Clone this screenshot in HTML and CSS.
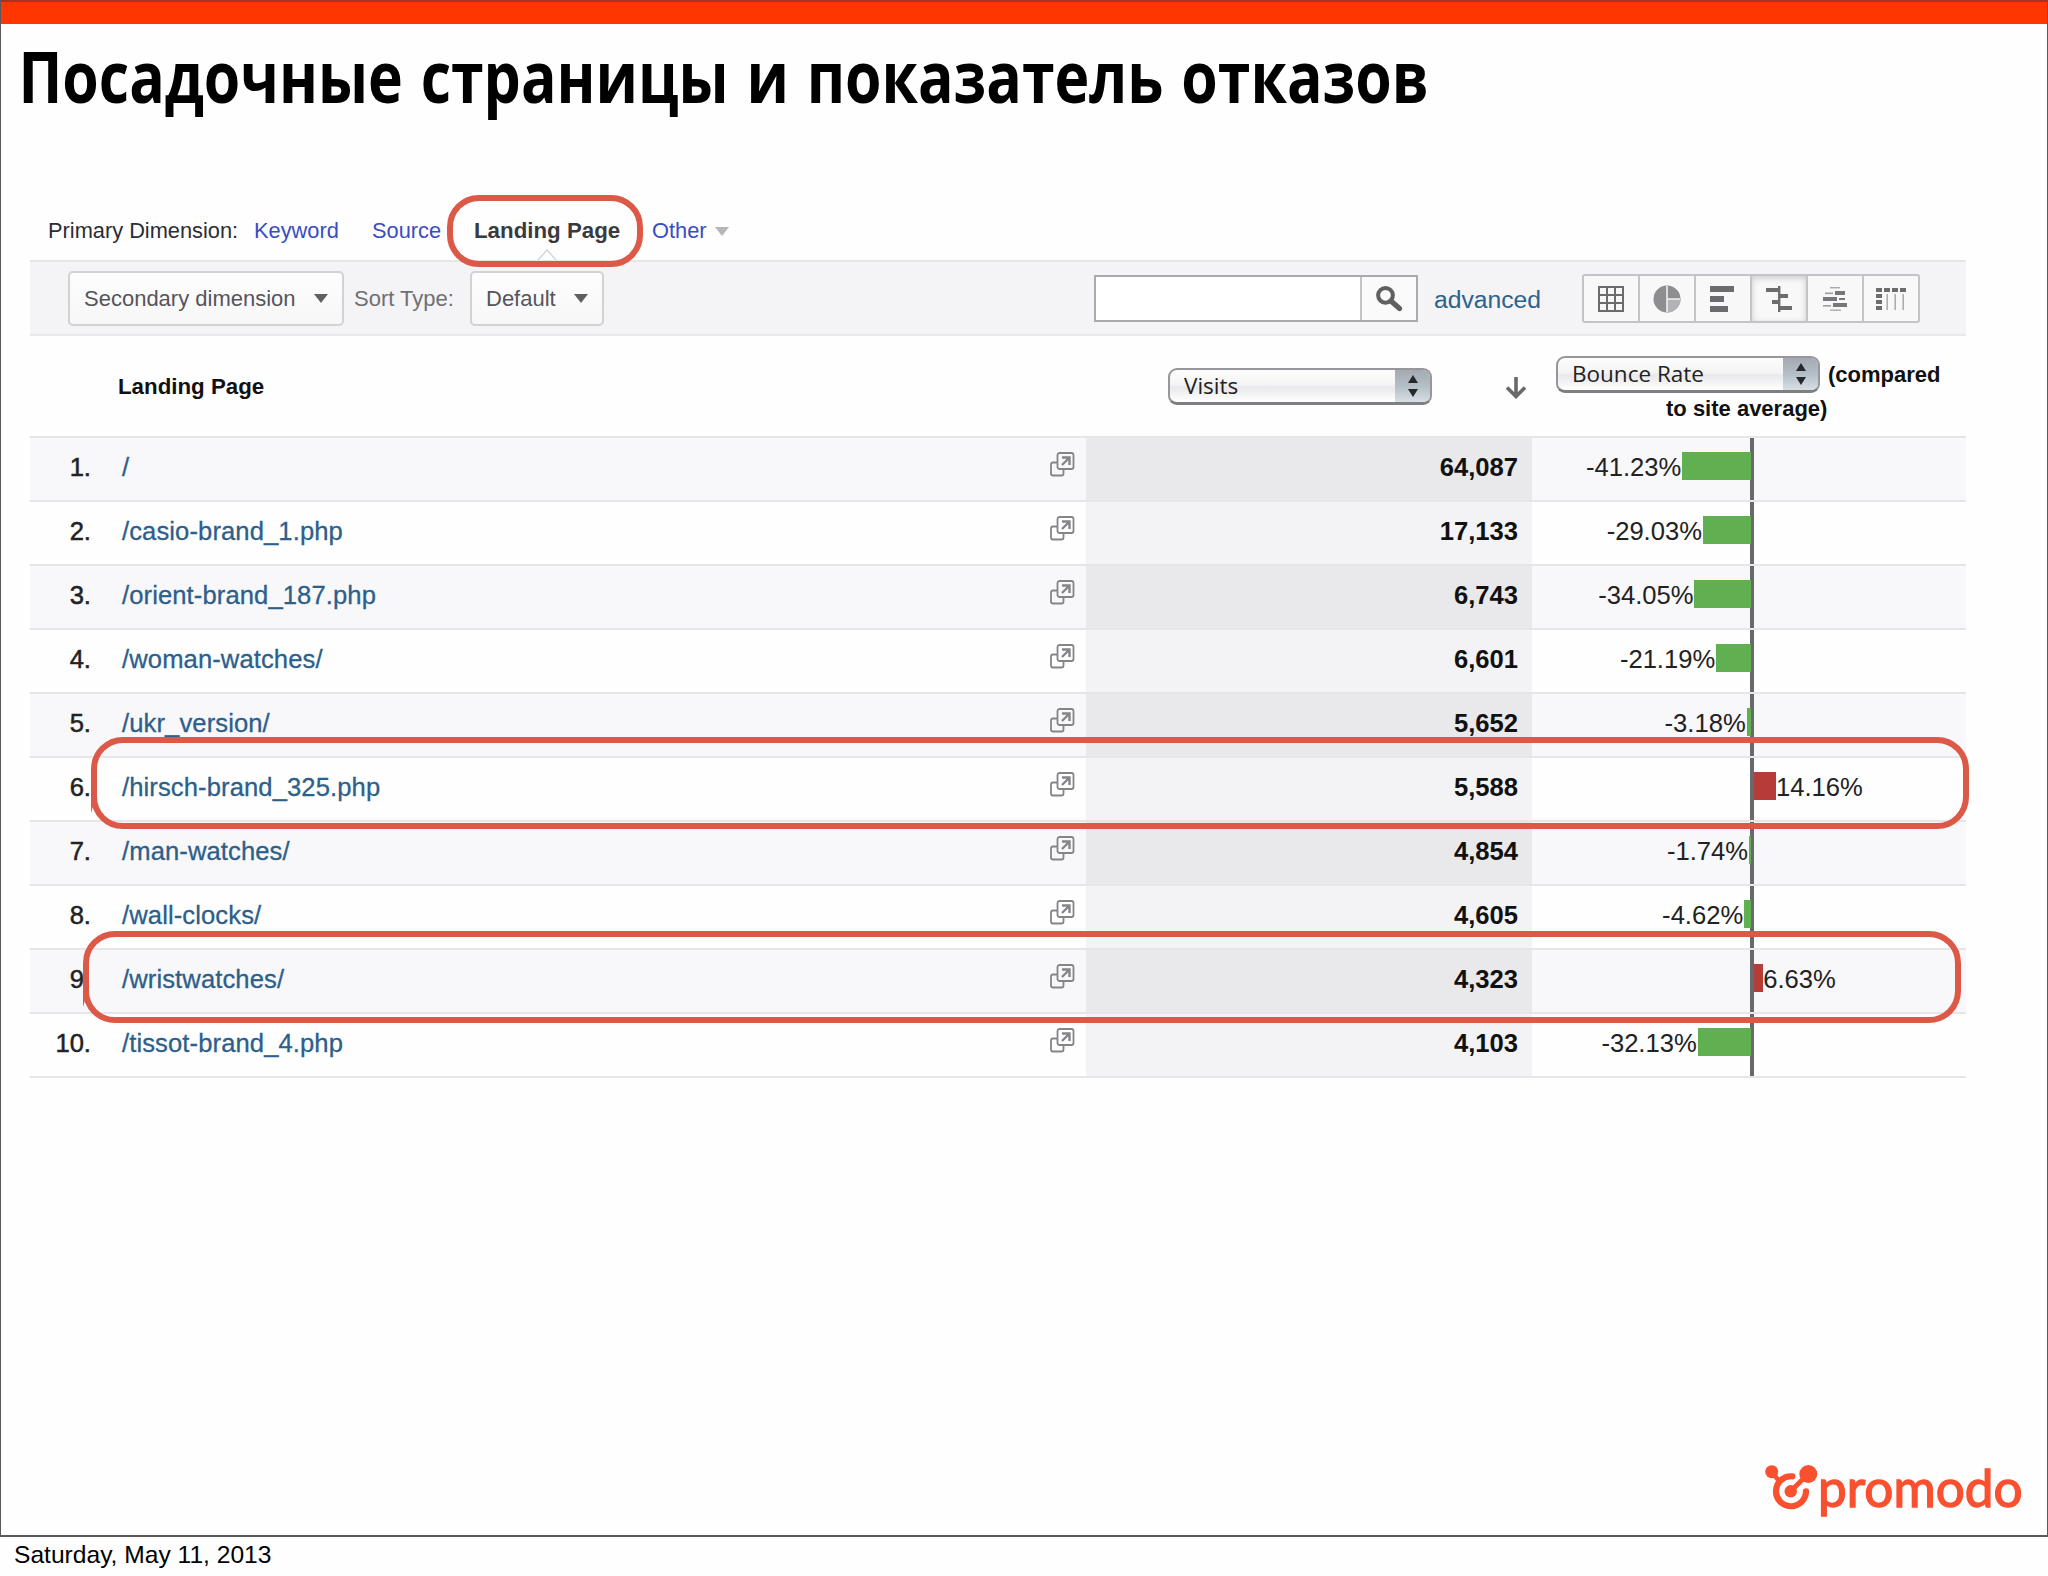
FILE: index.html
```html
<!DOCTYPE html>
<html lang="ru">
<head>
    <meta charset="UTF-8">
    <meta name="viewport" content="width=device-width, initial-scale=1.0">
    <title>Посадочные страницы и показатель отказов</title>
    <link rel="stylesheet" href="styles.css">
</head>
<body>
    <div class="slide">
        <div class="top-bar"></div>
        <h1>Посадочные страницы и показатель отказов</h1>

        <div class="report">
            <div class="dimensions">
                <span class="dim-label">Primary Dimension:</span>
                <a class="dim-keyword">Keyword</a>
                <a class="dim-source">Source</a>
                <b class="dim-active">Landing Page</b>
                <a class="dim-other">Other</a>
                <i class="caret light"></i>
                <svg class="notch" width="20" height="12" viewBox="0 0 20 12"><path d="M1 11 L10 1 L19 11" fill="#fff" stroke="#d6d6da" stroke-width="1.5"/></svg>
            </div>

            <div class="toolbar">
                <button class="btn btn-secondary">Secondary dimension <i class="caret"></i></button>
                <span class="sort-label">Sort Type:</span>
                <button class="btn btn-default">Default <i class="caret"></i></button>
                <div class="search">
                    <div class="search-input"></div>
                    <div class="search-btn">
                        <svg width="28" height="28" viewBox="0 0 28 28" fill="none" stroke="#606062"><circle cx="10.5" cy="10.3" r="7.4" stroke-width="4"/><path d="M16 16 L24.5 23.5" stroke-width="5.2" stroke-linecap="round"/></svg>
                    </div>
                </div>
                <a class="advanced">advanced</a>
                <div class="views">
                    <div class="view">
                        <svg width="28" height="28" viewBox="0 0 28 28"><path d="M2 2H26V26H2Z M10 2V26 M18 2V26 M2 10H26 M2 18H26" fill="none" stroke="#6c6b6e" stroke-width="2"/></svg>
                    </div>
                    <div class="view">
                        <svg width="28" height="28" viewBox="0 0 28 28"><circle cx="14" cy="14" r="13.5" fill="#8e8d90"/><path d="M14 14H27.5A13.5 13.5 0 0 1 14 27.5Z" fill="#b3b2b5"/><path d="M14 1V27 M14 14H27" stroke="#efeff1" stroke-width="1.6"/></svg>
                    </div>
                    <div class="view">
                        <svg width="28" height="28" viewBox="0 0 28 28" fill="#6c6b6e"><rect x="1" y="1" width="24" height="6"/><rect x="1" y="11" width="14" height="6"/><rect x="1" y="21" width="18" height="6"/></svg>
                    </div>
                    <div class="view selected">
                        <svg width="28" height="28" viewBox="0 0 28 28" fill="#6c6b6e"><rect x="13" y="1" width="2.4" height="26"/><rect x="1" y="3" width="13" height="4"/><rect x="14" y="9" width="9" height="4"/><rect x="7" y="15" width="7" height="4"/><rect x="14" y="21" width="13" height="4"/></svg>
                    </div>
                    <div class="view">
                        <svg width="28" height="28" viewBox="0 0 28 28" fill="#77767a"><rect x="9" y="2" width="10" height="1.4" opacity=".6"/><rect x="4" y="7.5" width="8" height="1.6" opacity=".7"/><rect x="14" y="6" width="10" height="4"/><rect x="2" y="12" width="14" height="4"/><rect x="18" y="13" width="6" height="2"/><rect x="2" y="20" width="8" height="1.6" opacity=".7"/><rect x="12" y="18" width="14" height="4"/><rect x="9" y="24.5" width="11" height="1.4" opacity=".6"/></svg>
                    </div>
                    <div class="view">
                        <svg width="32" height="28" viewBox="0 0 32 28" fill="#6c6b6e"><path d="M1 3h6v4H1z M9 3h6v4H9z M17 3h6v4h-6z M25 3h6v4h-6z M1 9h6v4H1z M1 15h6v4H1z M1 21h6v4H1z"/><path d="M11.5 9h1.4v16h-1.4z M19.5 9h1.4v16h-1.4z M27.5 9h1.4v16h-1.4z" opacity=".6"/></svg>
                    </div>
                </div>
            </div>

            <div class="table-head">
                <div class="head-page">Landing Page</div>
                <div class="select"><span>Visits</span><i class="stepper"></i></div>
                <svg class="sort-arrow" width="22" height="24" viewBox="0 0 22 24" fill="none" stroke="#69686b" stroke-width="3.6"><path d="M11 1V20 M2 11.5L11 20.5L20 11.5"/></svg>
                <div class="head-bounce">
                    <div class="bounce-line"><div class="select"><span>Bounce Rate</span><i class="stepper"></i></div>(compared</div>
                    <div class="bounce-line second">to site average)</div>
                </div>
            </div>

            <div class="rows" id="rows"></div>
        </div>

        <div class="mark mark-tab"></div>
        <div class="mark mark-row mark-hirsch"></div>
        <div class="mark mark-row mark-wrist"></div>

        <div class="logo">
            <svg width="54" height="46" viewBox="0 0 54 46" fill="none" stroke="#f9502f">
                <circle cx="6.700" cy="7.700" r="6.500" fill="#f9502f" stroke="none"/>
                <circle cx="43.300" cy="10" r="9" fill="#f9502f" stroke="none"/>
                <circle cx="25.700" cy="27.300" r="6.200" fill="#f9502f" stroke="none"/>
                <path d="M7 8L14 17" stroke-width="4.500"/>
                <path d="M26 27L43 10" stroke-width="5"/>
                <path d="M27.300 12.300A15 15 0 1 0 41 27.300" stroke-width="6.200" stroke-linecap="round"/>
            </svg>
            <span>promodo</span>
        </div>
    </div>
    <div class="date">Saturday, May 11, 2013</div>

    <script>
        const pages = [
            ["/", "64,087", -41.23],
            ["/casio-brand_1.php", "17,133", -29.03],
            ["/orient-brand_187.php", "6,743", -34.05],
            ["/woman-watches/", "6,601", -21.19],
            ["/ukr_version/", "5,652", -3.18],
            ["/hirsch-brand_325.php", "5,588", 14.16],
            ["/man-watches/", "4,854", -1.74],
            ["/wall-clocks/", "4,605", -4.62],
            ["/wristwatches/", "4,323", 6.63],
            ["/tissot-brand_4.php", "4,103", -32.13]
        ];
        const pxPerPercent = 1.69;
        const openIcon = `<svg width="26" height="26" viewBox="0 0 26 26" fill="none" stroke="#858488" stroke-width="1.800">
            <rect x="7.500" y="1" width="16" height="16" rx="2"/>
            <path d="M7 10.500H3Q1 10.500 1 12.500V21.500Q1 23.500 3 23.500H11.500Q13.500 23.500 13.500 21.500V17.500"/>
            <path d="M12 5.500H19.500V13 M19 6L12 13" stroke-width="2.400"/></svg>`;

        document.getElementById("rows").innerHTML = pages.map(([path, visits, rate], i) => {
            const label = `<span>${rate.toFixed(2)}%</span>`;
            const length = Math.abs(rate) * pxPerPercent;
            const neg = rate < 0 ? `${label}<i class="bar" style="width:${length - 1}px"></i>` : "";
            const pos = rate > 0 ? `<i class="bar" style="width:${length - 2}px"></i>${label}` : "";
            return `<div class="row">
                <div class="num">${i + 1}.</div>
                <a class="path">${path}</a>
                <div class="open">${openIcon}</div>
                <div class="visits">${visits}</div>
                <div class="neg">${neg}</div>
                <div class="pos">${pos}</div>
            </div>`;
        }).join("");
    </script>
</body>
</html>
```
FILE: styles.css
```css
* {
    box-sizing: border-box;
}
body {
    margin: 0;
    width: 2048px;
    height: 1576px;
    overflow: hidden;
    background: #fefefe;
    color: #111;
    font-family: "Liberation Sans", Arial, sans-serif;
    white-space: nowrap;
}
.slide {
    position: relative;
    height: 1537px;
    border: 1px solid #59585c;
    border-bottom-width: 2px;
    border-top: none;
}
.top-bar {
    height: 24px;
    background: #ff3600;
    border-top: 2px solid #9c3a20;
}
h1 {
    margin: 0;
    padding-left: 21px;
    height: 168px;
    font-family: "Open Sans", "Noto Sans", sans-serif;
    font-size: 71px;
    line-height: 104px;
    font-weight: bold;
    word-spacing: 3px;
    color: #000;
    transform: scaleX(0.83);
    transform-origin: 0 0;
}
.report {
    width: 1936px;
    margin-left: 29px;
}

/* primary dimension links */
.dimensions {
    position: relative;
    display: flex;
    align-items: center;
    height: 68px;
    padding: 10px 0 0 18px;
    font-size: 21.8px;
    color: #2c2c34;
}
.dimensions a {
    color: #3a4cc4;
}
.dim-label {
    width: 206px;
}
.dim-keyword {
    width: 118px;
}
.dim-source {
    width: 102px;
}
.dim-active {
    width: 178px;
    color: #3a3a3e;
    font-size: 22.3px;
}
.dim-other {
    width: 63px;
}
.notch {
    position: absolute;
    left: 507px;
    bottom: -1px;
}
.caret {
    border: 7px solid transparent;
    border-top: 9px solid #606062;
    border-bottom: none;
}
.caret.light {
    border-top-color: #b5b5ba;
}

/* grey toolbar */
.toolbar {
    display: flex;
    align-items: center;
    height: 76px;
    padding-left: 38px;
    background: #f4f3f5;
    border-top: 2px solid #e6e5e8;
    border-bottom: 2px solid #e9e8eb;
    font-size: 22px;
}
.btn {
    display: flex;
    align-items: center;
    justify-content: space-between;
    height: 55px;
    padding: 1px 14px 0 14px;
    border: 2px solid #d2d1d4;
    border-radius: 5px;
    background: linear-gradient(#fdfdfd, #f7f7f8);
    font: 22px "Liberation Sans", Arial, sans-serif;
    color: #55555a;
}
.btn-secondary {
    width: 276px;
}
.btn-default {
    width: 134px;
}
.sort-label {
    width: 126px;
    padding: 2px 0 0 10px;
    color: #707074;
}
.search {
    display: flex;
    width: 324px;
    height: 47px;
    margin: 1px 0 0 490px;
    border: 2px solid #aaa9ad;
    background: #fff;
}
.search-input {
    flex: 1;
    border-right: 2px solid #c4c3c7;
}
.search-btn {
    display: flex;
    align-items: center;
    justify-content: center;
    width: 54px;
    background: #fafafb;
}
.advanced {
    margin-left: 16px;
    padding-top: 3px;
    width: 148px;
    font-size: 24.7px;
    color: #2c628f;
}
.views {
    display: flex;
    height: 49px;
    margin-top: 1px;
    border: 2px solid #c4c3c7;
    border-radius: 3px;
    background: #f8f8f9;
}
.view {
    display: flex;
    align-items: center;
    justify-content: center;
    width: 56px;
    border-right: 2px solid #c4c3c7;
}
.view:last-child {
    width: 54px;
    border-right: none;
}
.view.selected {
    box-shadow: inset 0 2px 6px #c9c8cc;
}

/* column headings */
.table-head {
    display: flex;
    height: 100px;
    font-size: 22px;
    font-weight: bold;
}
.head-page {
    width: 1138px;
    padding: 38px 0 0 88px;
    font-size: 22.3px;
}
.table-head > .select {
    margin-top: 32px;
}
.sort-arrow {
    margin: 40px 29px 0 73px;
}
.select {
    display: flex;
    justify-content: space-between;
    width: 264px;
    height: 37px;
    border: 2px solid #97969a;
    border-bottom: 3px solid #7f7e83;
    border-radius: 9px;
    overflow: hidden;
    background: linear-gradient(#fdfdfd 0%, #f4f4f5 45%, #e9e8ea 55%, #fff 100%);
    font: 22.5px "Open Sans", "Noto Sans", sans-serif;
    color: #222;
}
.select span {
    padding-left: 14px;
    line-height: 32px;
}
.stepper {
    display: flex;
    flex-direction: column;
    align-items: center;
    justify-content: center;
    gap: 6px;
    width: 35px;
    background: linear-gradient(#a3aab2, #b4bec6 50%, #d5dfe4);
}
.stepper::before,
.stepper::after {
    content: "";
    border: 5px solid transparent;
}
.stepper::before {
    border-top: none;
    border-bottom: 8px solid #26282c;
}
.stepper::after {
    border-bottom: none;
    border-top: 8px solid #26282c;
}
.head-bounce {
    width: 410px;
    padding-top: 20px;
}
.bounce-line {
    display: flex;
    align-items: center;
    gap: 8px;
    height: 37px;
}
.bounce-line.second {
    height: 32px;
    padding-left: 110px;
}

/* data rows */
.row {
    display: grid;
    grid-template-columns: 61px 959px 36px 446px 220px 214px;
    height: 64px;
    border-top: 2px solid #e6e5e8;
    font-size: 25.6px;
    line-height: 58px;
}
.row:nth-child(odd) {
    background: #f8f7f9;
}
.row:last-child {
    height: 66px;
    border-bottom: 2px solid #e6e5e8;
}
.num {
    text-align: right;
    color: #222;
    -webkit-text-stroke: 0.5px #222;
}
.path {
    padding-left: 31px;
    letter-spacing: 0.1px;
    color: #2c5f8b;
    -webkit-text-stroke: 0.3px #2c5f8b;
}
.open svg {
    display: block;
    margin-top: 14px;
}
.visits {
    padding-right: 14px;
    text-align: right;
    font-weight: bold;
    background: #f3f2f4;
}
.row:nth-child(odd) .visits {
    background: #e9e8ea;
}
.neg,
.pos {
    display: flex;
    color: #222;
}
.neg {
    justify-content: flex-end;
    border-right: 2px solid #69686b;
}
.pos {
    border-left: 2px solid #69686b;
}
.bar {
    height: 28px;
    margin-top: 14px;
}
.neg .bar {
    margin-left: 1px;
    margin-right: -1px;
    background: #60af51;
}
.pos .bar {
    background: #b63c3a;
}

/* hand-placed outlines over the report */
.mark {
    position: absolute;
    border: 6px solid #dc5847;
    border-radius: 32px;
}
.mark-tab {
    left: 446px;
    top: 195px;
    width: 196px;
    height: 72px;
}
.mark-row::after {
    content: "";
    position: absolute;
    left: -6px;
    top: 50px;
    border-left: 6px solid #dc5847;
    border-bottom: 20px solid transparent;
}
.mark-hirsch {
    left: 90px;
    top: 737px;
    width: 1878px;
    height: 92px;
}
.mark-wrist {
    left: 82px;
    top: 931px;
    width: 1878px;
    height: 92px;
}

.logo {
    position: absolute;
    left: 1764px;
    top: 1464px;
    display: flex;
    color: #f9502f;
}
.logo span {
    margin: -12px 0 0 -1px;
    font: 51.3px/70px Lato, sans-serif;
    -webkit-text-stroke: 1.4px #f9502f;
}
.date {
    padding: 4px 0 0 14px;
    font-size: 24.6px;
    color: #000;
}
```
